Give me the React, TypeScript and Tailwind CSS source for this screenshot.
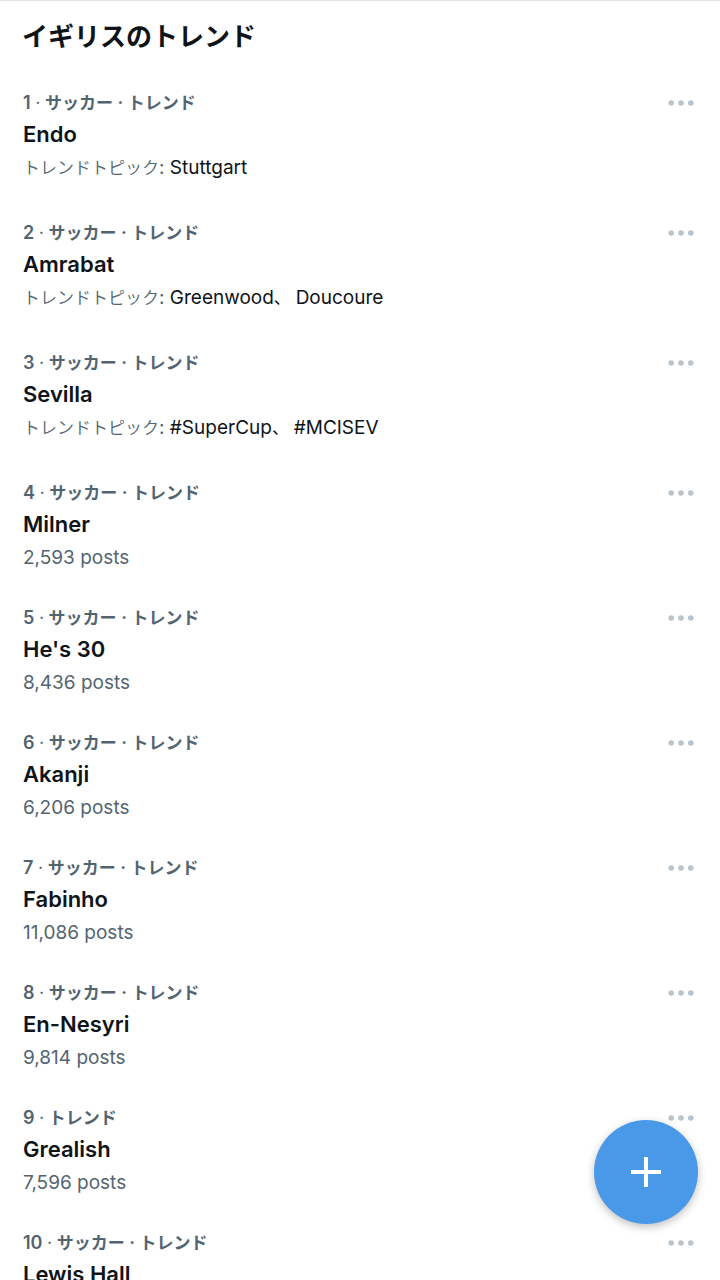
import clsx from "clsx";

interface Trend {
    rank: number;
    category?: string;
    name: string;
    posts?: string;
    topics?: string[];
}

const trends: Trend[] = [
    { rank: 1, category: "サッカー", name: "Endo", topics: ["Stuttgart"] },
    { rank: 2, category: "サッカー", name: "Amrabat", topics: ["Greenwood", "Doucoure"] },
    { rank: 3, category: "サッカー", name: "Sevilla", topics: ["#SuperCup", "#MCISEV"] },
    { rank: 4, category: "サッカー", name: "Milner", posts: "2,593" },
    { rank: 5, category: "サッカー", name: "He's 30", posts: "8,436" },
    { rank: 6, category: "サッカー", name: "Akanji", posts: "6,206" },
    { rank: 7, category: "サッカー", name: "Fabinho", posts: "11,086" },
    { rank: 8, category: "サッカー", name: "En-Nesyri", posts: "9,814" },
    { rank: 9, name: "Grealish", posts: "7,596" },
    { rank: 10, category: "サッカー", name: "Lewis Hall" },
];

const MoreIcon = () => (
    <svg viewBox="0 0 26 6" className="h-[6px] w-[26px] fill-[#b9c4cc]" aria-hidden="true">
        <circle cx="3.2" cy="3" r="2.8" />
        <circle cx="13" cy="3" r="2.8" />
        <circle cx="22.8" cy="3" r="2.8" />
    </svg>
);

const PlusIcon = () => (
    <svg viewBox="0 0 30 30" className="size-[30px] fill-white" aria-hidden="true">
        <path d="M13 0h4v13h13v4H17v13h-4V17H0v-4h13z" />
    </svg>
);

const TrendItem = ({ rank, category, name, posts, topics }: Trend) => {
    return (
        <li className={clsx("flex items-start justify-between pt-4 pr-[26px] pl-[23px]", topics ? "pb-[18px]" : "pb-[13px]")}>
            <div className="min-w-0">
                <p className="text-[18px] leading-[28px] font-semibold text-[#536471]">
                    {rank} <span className="font-normal">·</span>{" "}
                    {category && (
                        <>
                            <span className="text-[17px]">{category}</span>{" · "}
                        </>
                    )}
                    <span className="text-[17px]">トレンド</span>
                </p>
                <a href="#" className="block text-[22px] leading-[34px] font-semibold text-[#0f1419]">
                    {name}
                </a>
                {topics && (
                    <p className="text-[19px] leading-[34px] text-[#0f1419]">
                        <span className="text-[#536471]">
                            <span className="text-[17px] font-[350]">トレンドトピック</span>:{" "}
                        </span>
                        {topics.map((topic, i) => (
                            <span key={topic}>
                                {i > 0 && <span className="text-[17px]">、 </span>}
                                <a href="#">{topic}</a>
                            </span>
                        ))}
                    </p>
                )}
                {posts && <p className="text-[19px] leading-[34px] text-[#536471]">{posts} posts</p>}
            </div>
            <button type="button" aria-label="もっと見る" className="flex h-7 items-center">
                <MoreIcon />
            </button>
        </li>
    );
};

const App = () => {
    return (
        <div lang="ja" className="h-screen overflow-hidden border-t border-[#dfe3e6] bg-white font-['Inter','Noto_Sans_CJK_JP',sans-serif]">
            <main>
                <h1 className="px-[22px] py-4 text-[26px] leading-[40px] font-bold text-[#0f1419]">
                    イギリスのトレンド
                </h1>
                <ul>
                    {trends.map((trend) => (
                        <TrendItem key={trend.rank} {...trend} />
                    ))}
                </ul>
            </main>
            <button
                type="button"
                aria-label="ポストを作成"
                className="fixed right-[22px] bottom-14 flex size-[104px] items-center justify-center rounded-full bg-[#4a99e9] shadow-[0_3px_8px_rgba(0,0,0,0.25)]"
            >
                <PlusIcon />
            </button>
        </div>
    );
};

export default App;
